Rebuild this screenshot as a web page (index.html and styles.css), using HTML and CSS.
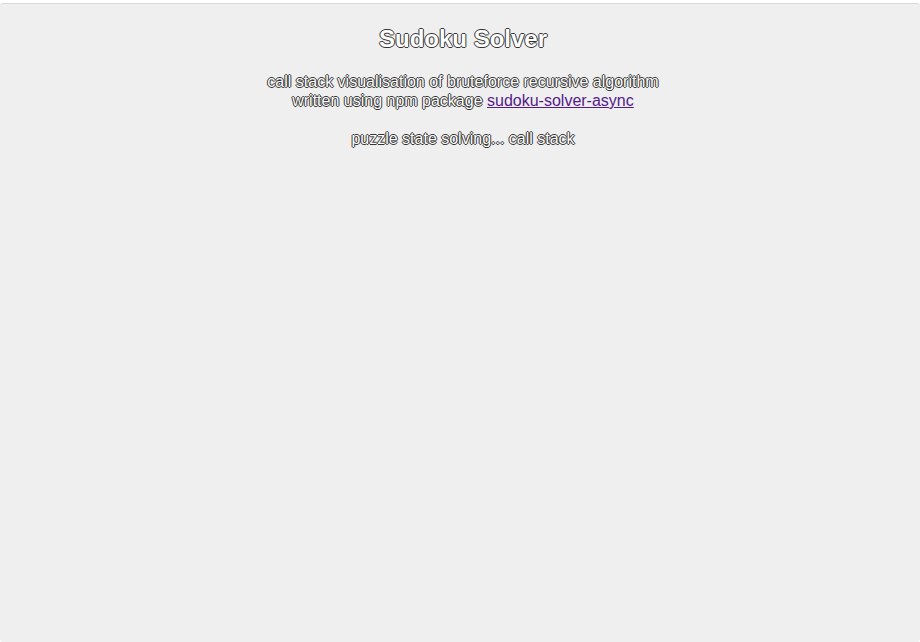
FILE: index.html
```html
<!DOCTYPE html>
<html>
<head>
<meta charset="utf-8">
<link rel="stylesheet" href="styles.css">
</head>
<body>
<div class="app">
  <h1 class="title">Sudoku Solver</h1>
  <p class="intro">call stack visualisation of bruteforce recursive algorithm<br>written using npm package <a class="pkg" href="#">sudoku-solver-async</a></p>
  <p class="status">puzzle state solving... call stack</p>
</div>
</body>
</html>
```

FILE: styles.css
```css
html, body {
  margin: 0;
  padding: 0;
  height: 100%;
  background: #ffffff;
}
body {
  padding-top: 3px;
  box-sizing: border-box;
}
.app {
  box-sizing: border-box;
  height: 100%;
  background: #efefef;
  border-top: 1px solid #d9d9d9;
  border-radius: 3px;
  font-family: "Liberation Sans", Arial, sans-serif;
  text-align: center;
  color: #ffffff;
  text-shadow: 1px 0 #333, -1px 0 #333, 0 1px #333, 0 -1px #333;
  padding-top: 21px;
  padding-left: 6px;
}
.title {
  font-size: 24px;
  font-weight: bold;
  line-height: 28px;
  margin: 0 0 19px;
}
.intro {
  font-size: 16px;
  line-height: 19px;
  margin: 0;
}
.pkg {
  color: #551a8b;
  text-shadow: none;
}
.status {
  font-size: 16px;
  line-height: 19px;
  margin: 19px 0 0;
}
```
